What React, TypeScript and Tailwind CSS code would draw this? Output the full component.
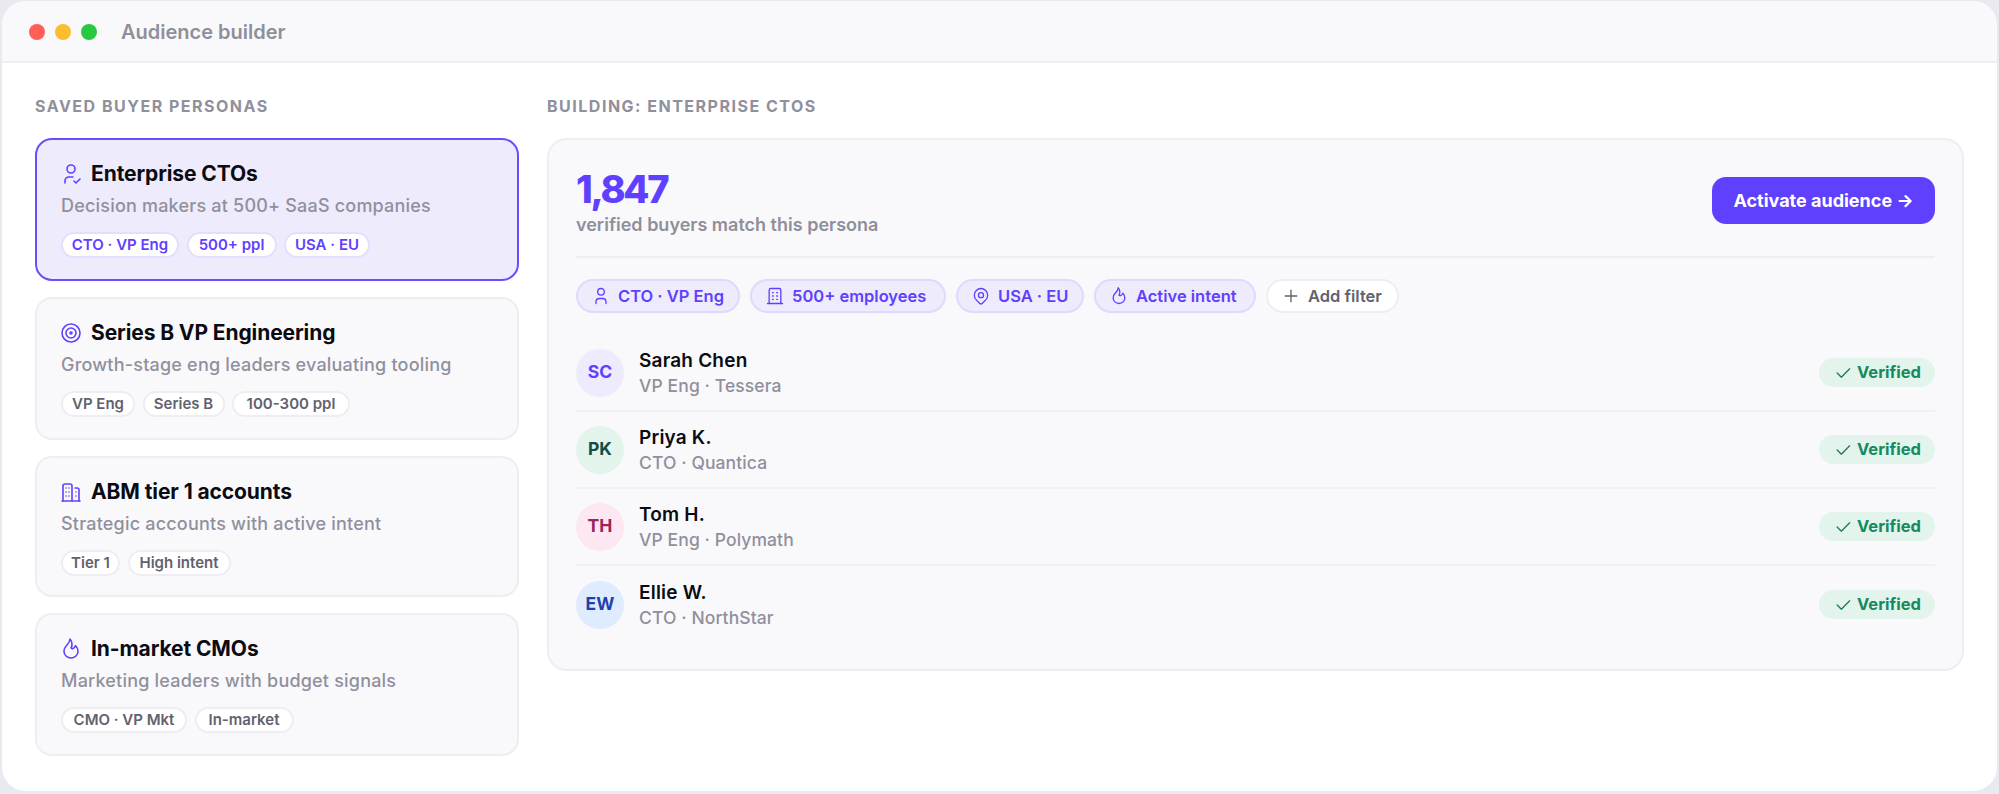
import {
  TbBuildings,
  TbBuilding,
  TbCheck,
  TbFlame,
  TbMapPin,
  TbPlus,
  TbTarget,
  TbUser,
  TbUserCheck,
} from "react-icons/tb";
import type { IconType } from "react-icons";

type Persona = {
  icon: IconType;
  title: string;
  desc: string;
  height: string;
  tags: { label: string; width: string }[];
  active?: boolean;
};

const personas: Persona[] = [
  {
    icon: TbUserCheck,
    title: "Enterprise CTOs",
    desc: "Decision makers at 500+ SaaS companies",
    height: "h-[143px]",
    tags: [
      { label: "CTO · VP Eng", width: "w-[118px]" },
      { label: "500+ ppl", width: "w-[90px]" },
      { label: "USA · EU", width: "w-[86px]" },
    ],
    active: true,
  },
  {
    icon: TbTarget,
    title: "Series B VP Engineering",
    desc: "Growth-stage eng leaders evaluating tooling",
    height: "h-[143px]",
    tags: [
      { label: "VP Eng", width: "w-[74px]" },
      { label: "Series B", width: "w-[82px]" },
      { label: "100-300 ppl", width: "w-[118px]" },
    ],
  },
  {
    icon: TbBuildings,
    title: "ABM tier 1 accounts",
    desc: "Strategic accounts with active intent",
    height: "h-[141px]",
    tags: [
      { label: "Tier 1", width: "w-[59px]" },
      { label: "High intent", width: "w-[103px]" },
    ],
  },
  {
    icon: TbFlame,
    title: "In-market CMOs",
    desc: "Marketing leaders with budget signals",
    height: "h-[143px]",
    tags: [
      { label: "CMO · VP Mkt", width: "w-[126px]" },
      { label: "In-market", width: "w-[99px]" },
    ],
  },
];

const filters = [
  { icon: TbUser, label: "CTO · VP Eng", width: "w-[164px]" },
  { icon: TbBuilding, label: "500+ employees", width: "w-[196px]" },
  { icon: TbMapPin, label: "USA · EU", width: "w-[128px]" },
  { icon: TbFlame, label: "Active intent", width: "w-[162px]" },
];

const buyers = [
  { initials: "SC", name: "Sarah Chen", role: "VP Eng · Tessera", avatar: "bg-[#efebff] text-[#5f40ff]" },
  { initials: "PK", name: "Priya K.", role: "CTO · Quantica", avatar: "bg-[#e2f4ec] text-[#134e4a]" },
  { initials: "TH", name: "Tom H.", role: "VP Eng · Polymath", avatar: "bg-[#fce7f3] text-[#9d2456]" },
  { initials: "EW", name: "Ellie W.", role: "CTO · NorthStar", avatar: "bg-[#dfebfe] text-[#1e40af]" },
];

function PersonaCard({ persona }: { persona: Persona }) {
  const Icon = persona.icon;
  return (
    <div
      className={
        persona.height +
        (persona.active
          ? " rounded-[17px] border-2 border-[#6a4dff] bg-[#eeebfd] px-[24px] pt-[20px]"
          : " rounded-[17px] border-2 border-[#eeedf3] bg-[#f9f9fc] px-[24px] pt-[20px]")
      }
    >
      <div className="flex h-[28px] items-center">
        <Icon className="-ml-[2px] h-[24px] w-[24px] shrink-0 text-[#6040ff]" strokeWidth={1.6} />
        <span className="ml-[8px] text-[21px] font-bold tracking-[-0.1px] text-[#0b0b12]">{persona.title}</span>
      </div>
      <p className="mt-[6px] h-[24px] text-[18px] leading-[24px] font-medium tracking-[0.2px] text-[#90909c]">{persona.desc}</p>
      <div className="mt-[14px] flex gap-[7.5px]">
        {persona.tags.map((tag) => (
          <span
            key={tag.label}
            className={
              tag.width +
              (persona.active
                ? " flex h-[26px] items-center justify-center rounded-full border-2 border-[#e4dffd] bg-white text-[15px] font-semibold text-[#6040ff]"
                : " flex h-[26px] items-center justify-center rounded-full border-2 border-[#eeedf3] bg-white text-[15px] font-semibold text-[#62626e]")
            }
          >
            {tag.label}
          </span>
        ))}
      </div>
    </div>
  );
}

export default function App() {
  return (
    <div className="h-[794px] w-[1999px] overflow-hidden bg-[#e9e9ef] pt-px pr-[2px] pb-[3px] pl-[2px] font-['Inter',sans-serif]">
      <div className="flex h-full flex-col overflow-hidden rounded-[24px] bg-white">
        <div className="flex h-[62px] shrink-0 items-center border-b-2 border-[#efeff3] bg-[#f9f9fc] pt-[2px] pl-[27px]">
          <div className="flex gap-[10px]">
            <span className="h-[16px] w-[16px] rounded-full bg-[#ff5f57]" />
            <span className="h-[16px] w-[16px] rounded-full bg-[#febc2e]" />
            <span className="h-[16px] w-[16px] rounded-full bg-[#28c840]" />
          </div>
          <span className="ml-[24px] text-[20px] font-semibold text-[#8f8f9b]">Audience builder</span>
        </div>

        <div className="flex gap-[28px] pt-[33px] pr-[33px] pl-[33px]">
          <div className="w-[484px] shrink-0">
            <h2 className="h-[21px] text-[16px] leading-[21px] font-bold tracking-[1.5px] text-[#90909c] uppercase">
              Saved buyer personas
            </h2>
            <div className="mt-[21px] flex flex-col gap-[16px]">
              {personas.map((p) => (
                <PersonaCard key={p.title} persona={p} />
              ))}
            </div>
          </div>

          <div className="min-w-0 flex-1">
            <h2 className="h-[21px] text-[16px] leading-[21px] font-bold tracking-[1.5px] text-[#90909c] uppercase">
              Building: Enterprise CTOs
            </h2>
            <div className="mt-[21px] h-[533px] rounded-[20px] border-2 border-[#eeedf3] bg-[#f9f9fc] px-[27px] pt-[28px]">
              <div className="flex h-[90px] items-start justify-between border-b-2 border-[#eeedf3]">
                <div>
                  <div className="mb-[4px] text-[38px] leading-[42px] font-extrabold tracking-[-2.3px] text-[#6040ff]">1,847</div>
                  <div className="text-[18px] leading-[22px] font-semibold text-[#8f8f9b]">verified buyers match this persona</div>
                </div>
                <button className="mt-[9px] flex h-[47px] w-[223px] items-center justify-center rounded-[14px] bg-[#6040ff] text-[18px] font-bold text-white">
                  Activate audience →
                </button>
              </div>

              <div className="mt-[21px] flex gap-[10px]">
                {filters.map((f) => (
                  <span
                    key={f.label}
                    className={
                      f.width +
                      " flex h-[34px] items-center gap-[7px] rounded-full border-2 border-[#dfd9fd] bg-[#eeebfd] pl-[13px] text-[16.5px] font-semibold text-[#6040ff]"
                    }
                  >
                    <f.icon className="h-[20px] w-[20px] shrink-0" strokeWidth={1.6} />
                    {f.label}
                  </span>
                ))}
                <span className="flex h-[34px] w-[133px] items-center gap-[7px] rounded-full border-2 border-[#eeedf3] bg-white pl-[13px] text-[16.5px] font-semibold text-[#62626e]">
                  <TbPlus className="h-[20px] w-[20px] shrink-0" strokeWidth={1.6} />
                  Add filter
                </span>
              </div>

              <div className="mt-[22px]">
                {buyers.map((b, i) => (
                  <div
                    key={b.initials}
                    className={
                      i < 3
                        ? "flex h-[77px] items-center border-b-2 border-[#f1f0f5]"
                        : "flex h-[77px] items-center"
                    }
                  >
                    <span className={"flex h-[48px] w-[48px] shrink-0 items-center justify-center rounded-full text-[17.5px] font-bold " + b.avatar}>
                      {b.initials}
                    </span>
                    <div className="ml-[15px] min-w-0 flex-1">
                      <div className="text-[19px] leading-[25px] font-semibold tracking-[0.2px] text-[#0b0b12]">{b.name}</div>
                      <div className="text-[17.5px] leading-[25px] font-medium tracking-[0.1px] text-[#90909c]">{b.role}</div>
                    </div>
                    <span className="flex h-[29px] w-[116px] items-center gap-[4px] rounded-full bg-[#e2f4ec] pl-[14px] text-[16.5px] font-bold text-[#15895f]">
                      <TbCheck className="h-[20px] w-[20px] shrink-0 text-[#1f7a5c]" strokeWidth={1.6} />
                      Verified
                    </span>
                  </div>
                ))}
              </div>
            </div>
          </div>
        </div>
      </div>
    </div>
  );
}
